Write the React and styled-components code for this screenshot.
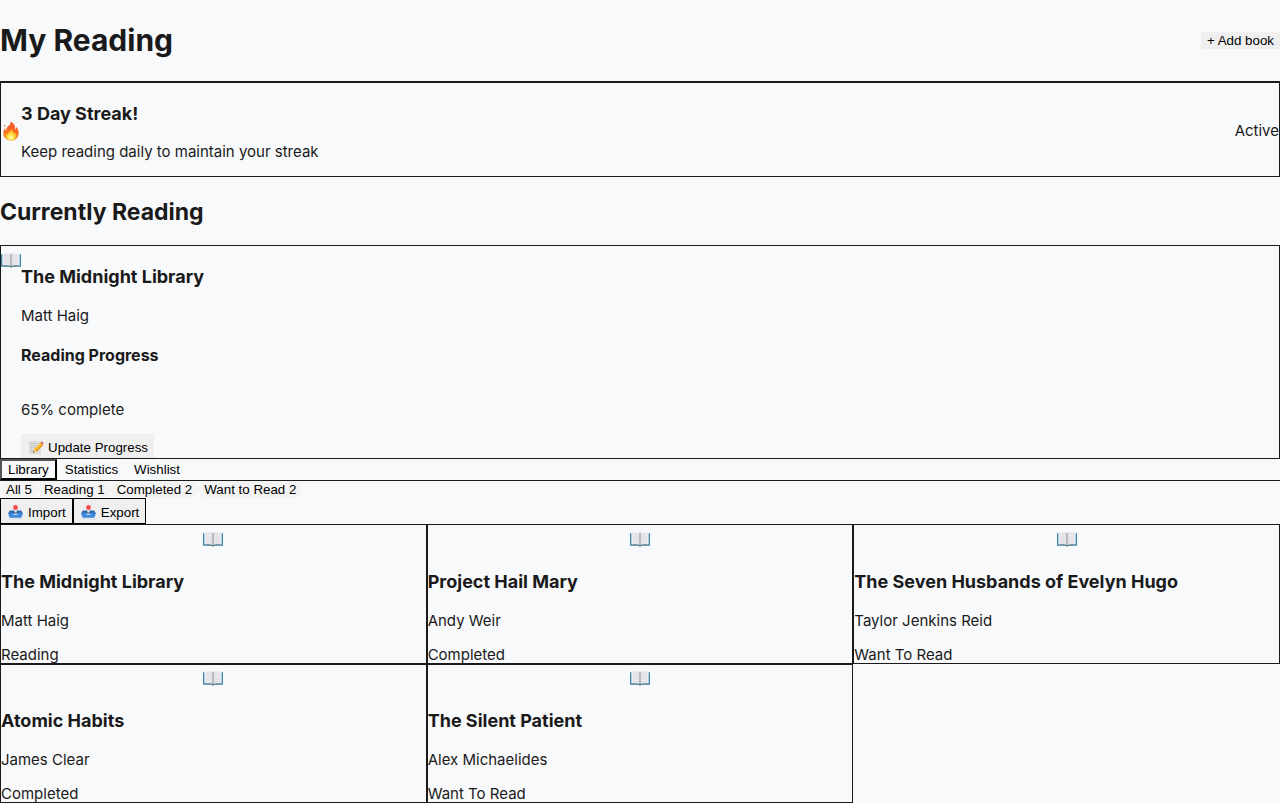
import React from "react";
import styled, { createGlobalStyle } from "styled-components";

const GlobalStyle = createGlobalStyle`
  * { box-sizing: border-box; }
  body {
    margin: 0;
    background: #f8f9fb;
    color: #1a1a1a;
    font-family: Inter, "Liberation Sans", sans-serif;
    font-size: 15px;
    line-height: 20px;
  }
`;

const Page = styled.main`
  display: flex;
  flex-direction: column;
  min-height: 100vh;
`;

const Header = styled.header`
  display: flex;
  align-items: center;
  justify-content: space-between;
  padding: 21px 0;
  border-bottom: 1px solid #1a1a1a;
`;

const PageTitle = styled.h1`
  margin: 0;
  font-size: 30px;
  line-height: 39px;
`;

const SectionTitle = styled.h2`
  margin: 20px 0 18px;
  font-size: 23px;
  line-height: 30px;
`;

const CardTitle = styled.h3`
  margin: ${(p) => (p.$tight ? "17px 0 16px" : "19px 0 17px")};
  font-size: 18px;
  line-height: 24px;
`;

const ProgressTitle = styled.h4`
  margin: 19px 0 35px;
  font-size: 16px;
  line-height: 20px;
`;

const Text = styled.p`
  margin: 0 0 ${(p) => (p.$last ? -2 : 14)}px;
`;

const Button = styled.button`
  display: inline-flex;
  align-items: center;
  gap: 4px;
  padding: ${(p) => (p.$tall ? "6px 6px 3px" : "1px 6px")};
  border: ${(p) => (p.$outlined ? "1px solid #000" : "0")};
  border-radius: ${(p) => (p.$pill ? 9 : 0)}px;
  background: ${(p) => (p.$pill ? "#f3f3f3" : "#efefef")};
  color: #000;
  font-family: "Liberation Sans", Arial, sans-serif;
  line-height: 15px;
`;

const Tab = styled.button`
  padding: 1px 6px;
  border: 2px ${(p) => (p.$active ? "outset #000" : "solid transparent")};
  background: transparent;
  color: #000;
  font-family: "Liberation Sans", Arial, sans-serif;
  line-height: 15px;
`;

const StreakCard = styled.section`
  display: flex;
  align-items: center;
  padding-top: 2px;
  border: 1px solid #1a1a1a;
`;

const Grow = styled.div`
  flex: 1;
`;

const CurrentCard = styled.article`
  display: flex;
  align-items: flex-start;
  border: 1px solid #1a1a1a;
`;

const IconSlot = styled.span`
  display: flex;
  align-items: center;
  justify-content: center;
  width: 20px;
  height: 28px;
`;

const Tabs = styled.nav`
  display: flex;
  border-bottom: 1px solid #1a1a1a;
`;

const Row = styled.div`
  display: flex;
`;

const Books = styled.section`
  flex: 1;
  display: grid;
  grid-template-columns: repeat(3, 1fr);
  grid-auto-rows: 1fr;
`;

const BookCard = styled.article`
  display: flex;
  flex-direction: column;
  border: 1px solid #1a1a1a;
`;

const Cover = styled.div`
  flex: 1;
  display: flex;
  align-items: center;
  justify-content: center;
  min-height: 25px;
  padding-top: 2px;
`;

const BookIcon = () => (
  <svg width="20" height="16" viewBox="0 0 20 16" aria-hidden="true">
    <path d="M0 2.200h2v11h16v-11h2v12.600h-8.200L10 15.600l-1.800-.8H0z" fill="#3a86a8" />
    <path d="M1.300 1.500C4.500.6 8 .7 10 2c2-1.300 5.500-1.400 8.700-.5v12.300c-3-.6-6.500-.5-8.700.7-2.200-1.200-5.700-1.300-8.700-.7z" fill="#ececf0" />
    <path d="M8.600 1.300q.8.200 1.400.7.600-.5 1.400-.7v12.600q-.8.200-1.400.6-.600-.4-1.400-.6z" fill="#d4d4da" />
    <path d="M10 2v12.500" stroke="#77777d" strokeWidth=".6" />
    <path d="M3 3.500q2.500-.6 5 .2M3 5.500q2.500-.6 5 .2M3 7.500q2.500-.6 5 .2M3 9.500q2.500-.6 5 .2M3 11.500q2.500-.6 5 .2M12 3.700q2.500-.8 5-.2M12 5.700q2.500-.8 5-.2M12 7.700q2.500-.8 5-.2M12 9.700q2.500-.8 5-.2M12 11.700q2.500-.8 5-.2" fill="none" stroke="#cbcbd1" strokeWidth=".5" />
    <path d="M1.300 13.900c3-.6 6.500-.5 8.700.7 2.200-1.200 5.700-1.300 8.700-.7" fill="none" stroke="#5d747f" strokeWidth=".7" />
    <path d="M9 14.500h2l-1 1.300z" fill="#79621f" />
  </svg>
);

const FireIcon = () => (
  <svg width="16" height="20" viewBox="0 0 16 20" aria-hidden="true">
    <defs>
      <linearGradient id="flame" x1="0" y1="0" x2="0" y2="1">
        <stop offset="0" stopColor="#f4512c" />
        <stop offset=".5" stopColor="#fb6a1f" />
        <stop offset="1" stopColor="#fb9a20" />
      </linearGradient>
      <radialGradient id="core" cx=".5" cy=".8" r=".65">
        <stop offset="0" stopColor="#fffbc0" />
        <stop offset=".5" stopColor="#ffe03c" />
        <stop offset="1" stopColor="#ffa51e" />
      </radialGradient>
    </defs>
    <path d="M7.200.5c4.200 1.700 5.300 4.800 4.900 7.700.9-.5 1.200-1.400 1.200-2.400 1.700 2 2.500 4.300 2.400 6.700-.2 4.400-3.400 7-7.700 7S.4 16.800.3 12.500C.2 10.300 1 8.500 2 7c.1 1.300.5 2.200 1.300 2.700C3.200 6.300 5.300 5.200 6.800 3.800 7.600 3 7.800 1.800 7.200.5z" fill="url(#flame)" />
    <path d="M1.500 3.700l1 .8-.6 1.200-.9-.8z" fill="#f4613b" />
    <path d="M8.700 7.500c.1 2.400 2 3.300 2.200 5.200.8-.4 1.200-1 1.400-1.800 1.800 4.800-.3 8.200-4.300 8.200s-6.300-3.200-4.700-7.400c.4.900.9 1.400 1.600 1.700C5 10.600 8 10 8.700 7.500z" fill="url(#core)" />
  </svg>
);

const MemoIcon = () => (
  <svg width="17" height="15" viewBox="0 0 17 15" aria-hidden="true">
    <path d="M2 1h12v13.500H2z" fill="#dededf" />
    <path d="M3.500 3.500h7M3.500 5.500h6M3.500 7.500h5M3.500 9.500h3M3.500 11.500h2" stroke="#b4b4ba" strokeWidth=".7" strokeDasharray="2 .7" />
    <path d="M6 12.800l.9-3.600L13.300 2.800l2.600 2.500L9.500 11.700z" fill="#fbc02c" />
    <path d="M8.800 11l6.200-6.200.9.500-6.400 6.400z" fill="#dd8a1c" />
    <path d="M13.300 2.800l1-1q.7-.5 1.400.1l.6.700q.6.700 0 1.400l-.6 1.300z" fill="#ec6670" />
    <path d="M6 12.800l.9-3.600 2.600 2.500z" fill="#e8c696" />
    <path d="M6 12.800l.4-1.600 1.200 1.100z" fill="#333" />
  </svg>
);

const TrayIcon = () => (
  <svg width="17" height="15" viewBox="0 0 17 15" aria-hidden="true">
    <path d="M.8 8.500h15.400V15H.8z" fill="#e5e8ec" />
    <path d="M2.800 5.500h11.400L16 8.800H1z" fill="#2a67a8" />
    <path d="M1 7.800h4.300q.5 2.200 3.200 2.200t3.200-2.200H16l-1.300 4.200q-.3.800-1.100.8H3.400q-.8 0-1.100-.8z" fill="#3a8be0" />
    <path d="M7.300 4h2.400v3.500H7.300z" fill="#dce4ef" />
    <circle cx="8.500" cy="2.500" r="2.400" fill="#f24c4b" />
  </svg>
);

const books = [
  ["The Midnight Library", "Matt Haig", "Reading"],
  ["Project Hail Mary", "Andy Weir", "Completed"],
  ["The Seven Husbands of Evelyn Hugo", "Taylor Jenkins Reid", "Want To Read"],
  ["Atomic Habits", "James Clear", "Completed"],
  ["The Silent Patient", "Alex Michaelides", "Want To Read"],
];

const filters = ["All 5", "Reading 1", "Completed 2", "Want to Read 2"];

export default function App() {
  return (
    <>
      <GlobalStyle />
      <Page>
        <Header>
          <PageTitle>My Reading</PageTitle>
          <Button>+ Add book</Button>
        </Header>
        <StreakCard>
          <IconSlot><FireIcon /></IconSlot>
          <Grow>
            <CardTitle $tight>3 Day Streak!</CardTitle>
            <Text>Keep reading daily to maintain your streak</Text>
          </Grow>
          <span>Active</span>
        </StreakCard>
        <SectionTitle>Currently Reading</SectionTitle>
        <CurrentCard>
          <IconSlot><BookIcon /></IconSlot>
          <Grow>
            <CardTitle>The Midnight Library</CardTitle>
            <Text>Matt Haig</Text>
            <ProgressTitle>Reading Progress</ProgressTitle>
            <Text>65% complete</Text>
            <Row>
              <Button $tall><MemoIcon />Update Progress</Button>
            </Row>
          </Grow>
        </CurrentCard>
        <Tabs>
          <Tab $active>Library</Tab>
          <Tab>Statistics</Tab>
          <Tab>Wishlist</Tab>
        </Tabs>
        <Row>
          {filters.map((label) => (
            <Button key={label} $pill>{label}</Button>
          ))}
        </Row>
        <Row>
          <Button $tall $outlined><TrayIcon />Import</Button>
          <Button $tall $outlined><TrayIcon />Export</Button>
        </Row>
        <Books>
          {books.map(([title, author, status]) => (
            <BookCard key={title}>
              <Cover><BookIcon /></Cover>
              <CardTitle>{title}</CardTitle>
              <Text>{author}</Text>
              <Text $last>{status}</Text>
            </BookCard>
          ))}
        </Books>
      </Page>
    </>
  );
}
